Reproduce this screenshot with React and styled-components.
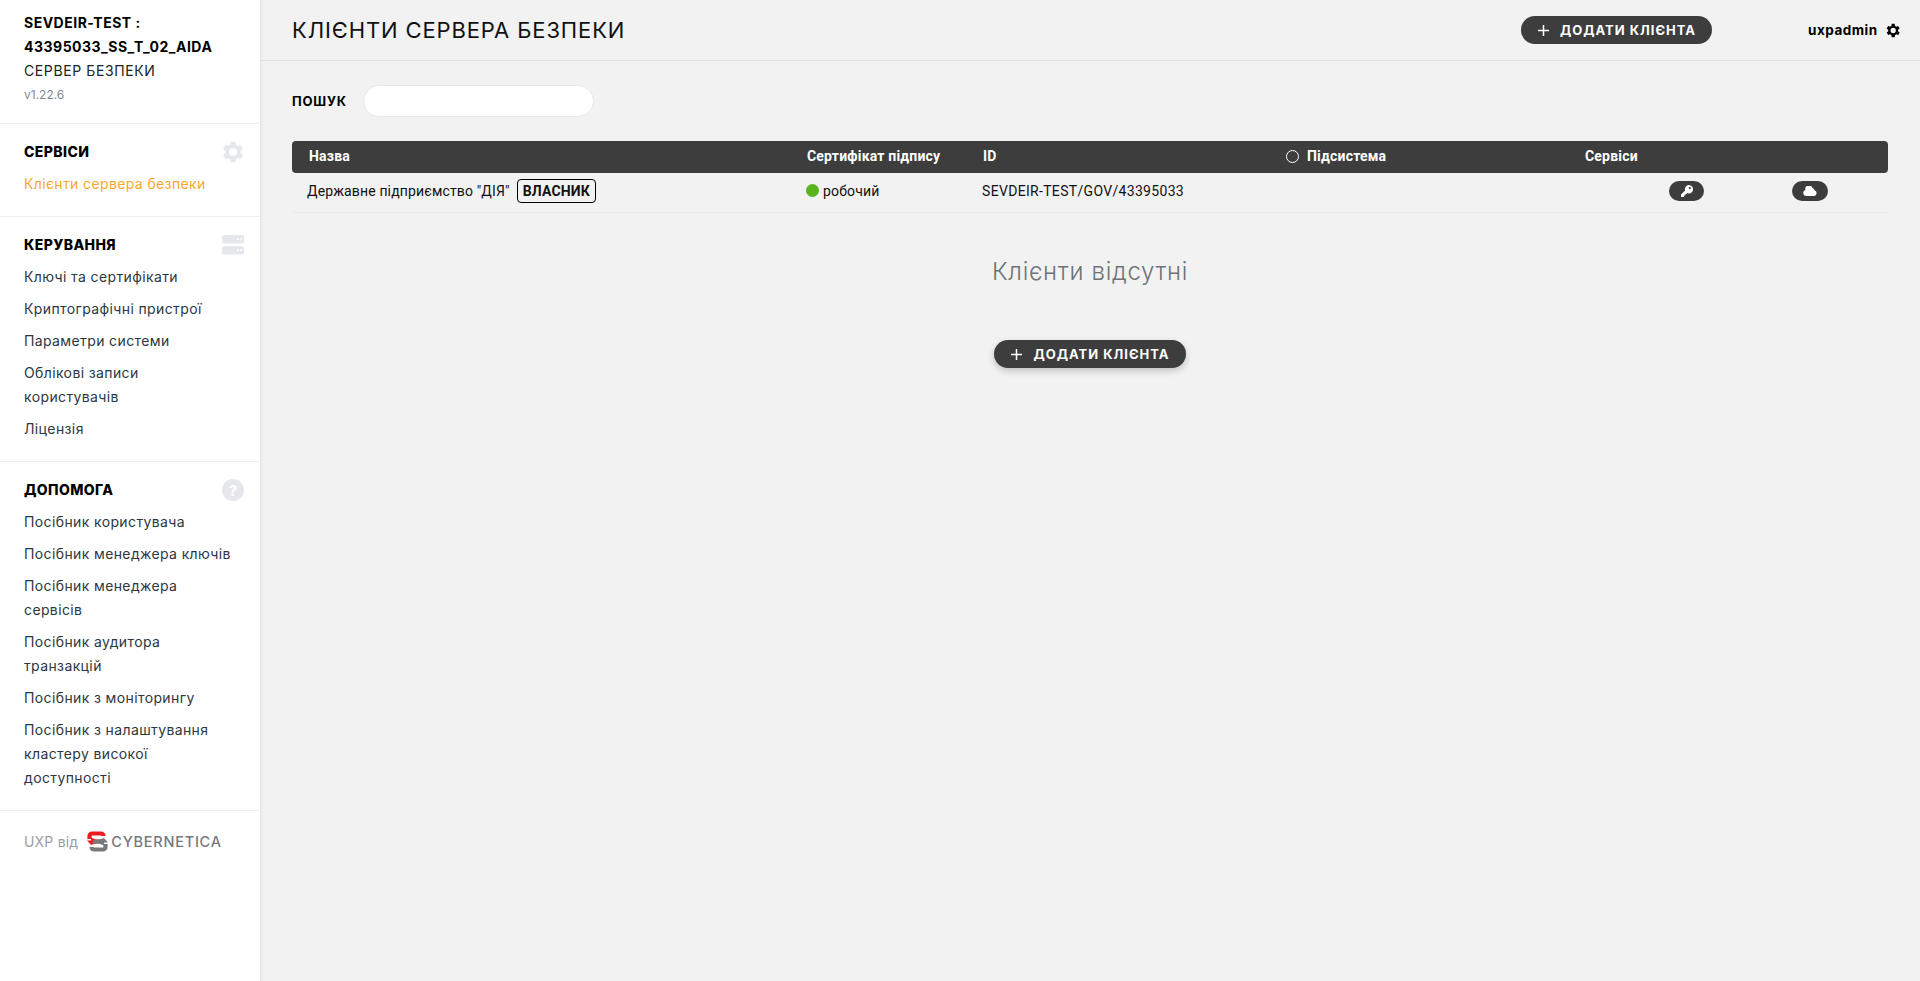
import React from "react";
import styled, { createGlobalStyle } from "styled-components";

const Global = createGlobalStyle`
  html, body { margin: 0; padding: 0; height: 100%; overflow: hidden; }
  body { background: #f2f2f2; font-family: Inter, "Noto Sans", sans-serif; color: #000; }
  * { box-sizing: border-box; }
`;
const Page = styled.div`display: flex; height: 100vh; overflow: hidden;`;
const Sidebar = styled.aside`
  width: 260px; flex: none; background: #fff; box-shadow: 0 0 4px rgba(0,0,0,.12);
  display: flex; flex-direction: column; z-index: 1;
`;
const Section = styled.section`
  padding: ${p => p.$pad || "12px 16px 16px 24px"};
  border-bottom: 1px solid #eeeeee;
`;
const ServerName = styled.div`font-size: 14px; font-weight: 700; line-height: 24px; letter-spacing: .5px; white-space: nowrap;`;
const ServerType = styled.div`font-size: 14px; line-height: 24px; letter-spacing: .6px; color: #222;`;
const Version = styled.div`font-size: 12px; line-height: 24px; color: #828a94;`;
const SectionHead = styled.div`display: flex; justify-content: space-between; align-items: center; height: 32px;`;
const SectionTitle = styled.div`font-size: 14px; font-weight: 800; letter-spacing: .4px; padding-bottom: 2px;`;
const SideLink = styled.a`
  display: block; padding: 3.5px 0 4.5px; font-size: 14px; line-height: 24px; letter-spacing: .38px;
  color: ${p => p.$active ? "#f9a72b" : "#2c3742"};
`;
const Footer = styled.div`display: flex; align-items: center; padding: 0 24px; height: 60px;`;
const FooterText = styled.span`font-size: 14px; letter-spacing: .2px; color: #9a9fa5; margin-right: 9px;`;
const Brand = styled.span`font-size: 14.5px; font-weight: 500; color: #77787b; letter-spacing: .75px; margin-left: 3px; white-space: nowrap;`;
const Main = styled.main`flex: 1; min-width: 0; display: flex; flex-direction: column;`;
const TopBar = styled.header`
  height: 61px; flex: none; display: flex; align-items: center; padding: 0 20px 0 32px;
  border-bottom: 1px solid #e4e4e4;
`;
const Title = styled.h1`margin: 0; flex: 1; font-size: 22px; font-weight: 400; letter-spacing: .87px; color: #111;`;
const Pill = styled.button`
  display: flex; align-items: center; justify-content: center; gap: 10px; border: 0; height: 28px;
  width: ${p => p.$w}px; border-radius: 14px; background: #3d3d3d; color: #fff;
  font: 700 13px Inter, sans-serif; letter-spacing: 1px; padding: 0;
  box-shadow: ${p => p.$shadow ? "0 3px 7px rgba(0,0,0,.2)" : "none"};
`;
const User = styled.div`display: flex; align-items: center; gap: 8px; margin-left: 96px; width: 92px; font-size: 13.5px; font-weight: 700; letter-spacing: .5px;`;
const Content = styled.div`padding: 24px 32px 0;`;
const SearchRow = styled.div`display: flex; align-items: center; gap: 16px; height: 32px;`;
const SearchLabel = styled.label`font-size: 13px; font-weight: 700; letter-spacing: .8px;`;
const SearchInput = styled.div`width: 231px; height: 32px; border-radius: 16px; background: #fff; border: 1px solid #e8e8e8;`;
const Grid = "grid-template-columns: 498px 176px 303px 299px 84px 123px 1fr;";
const TableHead = styled.div`
  display: grid; ${Grid} margin-top: 24px; height: 32px; align-items: center; background: #3d3d3d; border-radius: 4px;
  color: #fff; font: 700 14px Roboto, sans-serif; letter-spacing: .2px; padding: 0 0 2px 17px;
`;
const SubHead = styled.span`display: flex; align-items: center; gap: 8px;`;
const Circle = styled.i`width: 13px; height: 13px; border: 1px solid #fff; border-radius: 50%;`;
const Row = styled.div`
  display: grid; ${Grid} height: 40px; align-items: center; padding: 0 0 4px 17px; border-bottom: 1px solid #ebebeb;
  font: 400 14px Roboto, sans-serif; letter-spacing: .15px; color: #111;
`;
const NameCell = styled.div`display: flex; align-items: center; gap: 7px; margin-left: -2px;`;
const IdCell = styled.span`letter-spacing: .32px; margin-left: -1px;`;
const Badge = styled.span`
  border: 1px solid #000; border-radius: 4px; height: 24px; padding: 0 5px; display: flex; align-items: center;
  font-weight: 700; font-size: 14px;
`;
const Status = styled.div`display: flex; align-items: center; gap: 4px; margin-left: -1px;`;
const Dot = styled.i`width: 13px; height: 13px; border-radius: 50%; background: #5ab21d;`;
const IconBtn = styled.span`
  width: ${p => p.$w}px; height: 20px; border-radius: 10px; background: #3d3d3d; display: flex; align-items: center; justify-content: center;
`;
const Empty = styled.div`text-align: center; margin-top: 44px; font-size: 24px; font-weight: 300; color: #6d7278; letter-spacing: .7px; line-height: 30px;`;
const Center = styled.div`display: flex; justify-content: center; margin-top: 53px;`;

const Plus = () => <svg width="13" height="13" viewBox="0 0 13 13"><path d="M6.500 1v11M1 6.500h11" stroke="#fff" strokeWidth="1.500" fill="none"/></svg>;
const GearPath = "M19.400 13a7.600 7.600 0 0 0 0-2l2.100-1.600-2-3.500-2.500 1a7.400 7.400 0 0 0-1.700-1L15 3.200h-4l-.4 2.700a7.400 7.400 0 0 0-1.700 1l-2.500-1-2 3.500L6.500 11a7.600 7.600 0 0 0 0 2l-2.100 1.600 2 3.500 2.500-1a7.400 7.400 0 0 0 1.700 1l.4 2.700h4l.4-2.700a7.400 7.400 0 0 0 1.700-1l2.500 1 2-3.500zM13 15.500a3.500 3.500 0 1 1 0-7 3.500 3.500 0 0 1 0 7z";
const Gear = ({ size, color }) => <svg width={size} height={size} viewBox="3.500 2.500 19 19"><path fill={color} fillRule="evenodd" d={GearPath}/></svg>;
const ServerIcon = () => (
  <svg width="22" height="20" viewBox="0 0 22 20">
    <rect y="0" width="22" height="8.500" rx="2.500" fill="#e6e7ea"/><rect y="11" width="22" height="8.500" rx="2.500" fill="#e6e7ea"/>
    <path d="M15 4.200h2M18 4.200h2M15 15.200h2M18 15.200h2" stroke="#fff" strokeWidth="1.400"/>
  </svg>
);
const Help = styled.span`
  width: 22px; height: 22px; border-radius: 50%; background: #e6e7ea; color: #fff; font-size: 14px; font-weight: 800;
  display: flex; align-items: center; justify-content: center;
`;
const Logo = () => (
  <svg width="21" height="21" viewBox="0 0 21 21" fill="none">
    <path d="M2.500 8V5a2.500 2.500 0 0 1 2.500-2.500h9a2.500 2.500 0 0 1 2.500 2.500" stroke="#ed1c24" strokeWidth="4.200"/>
    <path d="M18.500 13v3a2.500 2.500 0 0 1-2.500 2.500H7a2.500 2.500 0 0 1-2.500-2.500" stroke="#77787b" strokeWidth="4.200"/>
    <path d="M0 9.500h4V6.500l5 2H16l-2 4H8.500l-4.500 1.500z" fill="#ed1c24"/>
    <path d="M21 11.500h-4v3l-5-2H5l2-4h5.500l4.500-1.500z" fill="#77787b"/>
  </svg>
);
const Key = () => <svg width="12" height="12" viewBox="0 0 12 12"><path fill="#fff" fillRule="evenodd" d="M7.800 0a4.200 4.200 0 1 1-1.500 8.100L5 9.400H3.600v1.300L2.500 12H0V9.600l4.100-4.200A4.200 4.200 0 0 1 7.800 0zm1 2a1.100 1.100 0 1 0 0 2.200 1.100 1.100 0 0 0 0-2.200z"/></svg>;
const Cloud = () => <svg width="14" height="10" viewBox="0 0 14 10"><path fill="#fff" d="M3 10a3 3 0 0 1-.5-5.900A3.600 3.600 0 0 1 9.400 2 2.800 2.800 0 0 1 11.400 4.300 2.900 2.900 0 0 1 11 10z"/></svg>;

const manage = [["Ключі та сертифікати"], ["Криптографічні пристрої"], ["Параметри системи"], ["Облікові записи", "користувачів"], ["Ліцензія"]];
const help = [["Посібник користувача"], ["Посібник менеджера ключів"], ["Посібник менеджера", "сервісів"], ["Посібник аудитора", "транзакцій"], ["Посібник з моніторингу"], ["Посібник з налаштування", "кластеру високої", "доступності"]];
const Links = ({ items }) => items.map(lines => (
  <SideLink key={lines[0]}>{lines.map((l, i) => <React.Fragment key={l}>{i > 0 && <br/>}{l}</React.Fragment>)}</SideLink>
));

export default function App() {
  return (
    <Page>
      <Global/>
      <Sidebar>
        <Section $pad="11px 16px 16px 24px">
          <ServerName>SEVDEIR-TEST :</ServerName>
          <ServerName>43395033_SS_T_02_AIDA</ServerName>
          <ServerType>СЕРВЕР БЕЗПЕКИ</ServerType>
          <Version>v1.22.6</Version>
        </Section>
        <Section>
          <SectionHead><SectionTitle>СЕРВІСИ</SectionTitle><Gear size={22} color="#e6e7ea"/></SectionHead>
          <SideLink $active>Клієнти сервера безпеки</SideLink>
        </Section>
        <Section>
          <SectionHead><SectionTitle>КЕРУВАННЯ</SectionTitle><ServerIcon/></SectionHead>
          <Links items={manage}/>
        </Section>
        <Section>
          <SectionHead><SectionTitle>ДОПОМОГА</SectionTitle><Help>?</Help></SectionHead>
          <Links items={help}/>
        </Section>
        <Footer>
          <FooterText>UXP від</FooterText><Logo/><Brand>CYBERNETICA</Brand>
        </Footer>
      </Sidebar>
      <Main>
        <TopBar>
          <Title>КЛІЄНТИ СЕРВЕРА БЕЗПЕКИ</Title>
          <Pill $w={191}><Plus/>ДОДАТИ КЛІЄНТА</Pill>
          <User>uxpadmin <Gear size={15} color="#000"/></User>
        </TopBar>
        <Content>
          <SearchRow><SearchLabel>ПОШУК</SearchLabel><SearchInput/></SearchRow>
          <TableHead>
            <span>Назва</span><span>Сертифікат підпису</span><span>ID</span>
            <SubHead><Circle/>Підсистема</SubHead><span>Сервіси</span>
          </TableHead>
          <Row>
            <NameCell>Державне підприємство "ДІЯ" <Badge>ВЛАСНИК</Badge></NameCell>
            <Status><Dot/>робочий</Status>
            <IdCell>SEVDEIR-TEST/GOV/43395033</IdCell>
            <span/><span/>
            <IconBtn $w={35}><Key/></IconBtn>
            <IconBtn $w={36}><Cloud/></IconBtn>
          </Row>
          <Empty>Клієнти відсутні</Empty>
          <Center><Pill $w={192} $shadow><Plus/>ДОДАТИ КЛІЄНТА</Pill></Center>
        </Content>
      </Main>
    </Page>
  );
}
